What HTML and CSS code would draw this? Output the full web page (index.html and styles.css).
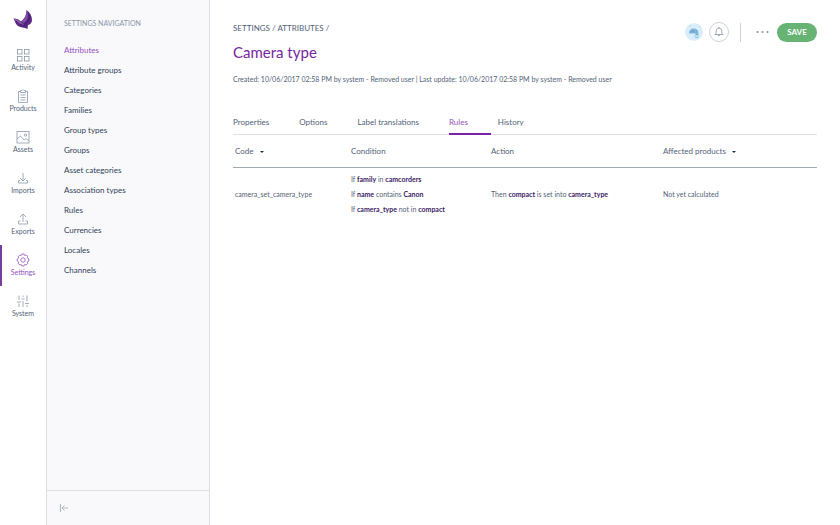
FILE: index.html
```html
<!DOCTYPE html>
<html lang="en">
<head>
<meta charset="utf-8">
<title>Camera type</title>
<link rel="stylesheet" href="styles.css">
</head>
<body>
<div class="app">
  <nav class="rail" aria-label="Main">
    <a class="logo" href="#" aria-label="Home">
      <svg width="20" height="21" viewBox="0 0 20 21">
        <path d="M0.500 9.500C4 9.500 6 10.500 8 12.500C11.500 10 13.500 6 13.500 1C17 3.500 19 7 19 11C19 14 17 15.500 15 16L14.500 20C11 18 8 19 5 17C2.500 15.500 2 12.500 .5 9.500Z" fill="#5b2a86"/>
        <path d="M1 9.800C4 10 6.500 11.500 8 13.500L12.500 16.500C7 16.500 3.500 14 1 9.800Z" fill="#8a5aad"/>
        <path d="M13.800 1.500C16 6 14.500 12 10.500 14L8.500 12.800C12 10 13.800 6 13.800 1.500Z" fill="#8652a9"/>
        <path d="M3 12C6 15.500 10 17 14 16M15.500 4C17.500 9 15.500 13 11.500 15" fill="none" stroke="#3d1562" stroke-width=".9"/>
      </svg>
    </a>
    <a class="rail-item" href="#">
      <svg class="icon" viewBox="0 0 14 14"><rect x="1.500" y="1.500" width="4.500" height="4.500"/><rect x="8.500" y="1.500" width="4.500" height="4.500"/><rect x="1.500" y="8.500" width="4.500" height="4.500"/><rect x="8.500" y="8.500" width="4.500" height="4.500"/></svg>
      <span>Activity</span>
    </a>
    <a class="rail-item" href="#">
      <svg class="icon" viewBox="0 0 14 14"><path d="M4.500 2.500H2.500V13.500H11.500V2.500H9.500M4.500 1.500H6L7 .5L8 1.500H9.500V3.500H4.500ZM4.500 6H9.500M4.500 8.500H9.500M4.500 11H9.500"/></svg>
      <span>Products</span>
    </a>
    <a class="rail-item" href="#">
      <svg class="icon" viewBox="0 0 14 14"><rect x="1" y="1.500" width="12" height="11.500"/><circle cx="9.500" cy="5" r="1.200"/><path d="M1 9L4.500 6L8 10L10 8.500L13 11"/></svg>
      <span>Assets</span>
    </a>
    <a class="rail-item" href="#">
      <svg class="icon" viewBox="0 0 14 14"><path d="M7 2V10M4 7L7 10L10 7M4 9.500H2.500V12H11.500V9.500H10"/></svg>
      <span>Imports</span>
    </a>
    <a class="rail-item" href="#">
      <svg class="icon" viewBox="0 0 14 14"><path d="M7 10V2M4 5L7 2L10 5M4.500 9H2.500V12H11.500V9H9.500"/></svg>
      <span>Exports</span>
    </a>
    <a class="rail-item active" href="#" aria-current="page">
      <svg class="icon" viewBox="0 0 14 14"><circle cx="7" cy="7" r="2.200"/><path d="M6 1H8L8.600 2.400L10.300 1.900L11.500 3.200L11.200 4.800L12.800 5.800V8L11.400 8.800L11.700 10.500L10.400 11.800L8.800 11.400L8 13H6L5.200 11.500L3.600 11.900L2.300 10.600L2.600 9L1.200 8V6L2.600 5.100L2.300 3.500L3.600 2.200L5.200 2.600Z"/></svg>
      <span>Settings</span>
    </a>
    <a class="rail-item" href="#">
      <svg class="icon" viewBox="0 0 14 14"><path d="M3 1.500V6M3 9.500V13M1 8H5M7 1.500V3M7 7V13M5.500 5H8.500M11 1.500V7.500M11 11V13M9 9.500H13"/></svg>
      <span>System</span>
    </a>
  </nav>

  <aside class="panel">
    <nav class="panel-nav" aria-labelledby="panel-title">
      <h2 id="panel-title">SETTINGS NAVIGATION</h2>
      <ul>
        <li><a class="current" href="#">Attributes</a></li>
        <li><a href="#">Attribute groups</a></li>
        <li><a href="#">Categories</a></li>
        <li><a href="#">Families</a></li>
        <li><a href="#">Group types</a></li>
        <li><a href="#">Groups</a></li>
        <li><a href="#">Asset categories</a></li>
        <li><a href="#">Association types</a></li>
        <li><a href="#">Rules</a></li>
        <li><a href="#">Currencies</a></li>
        <li><a href="#">Locales</a></li>
        <li><a href="#">Channels</a></li>
      </ul>
    </nav>
    <div class="panel-foot">
      <button class="plain" type="button" aria-label="Collapse navigation">
        <svg class="collapse" viewBox="0 0 10 10"><path d="M1.500 1V9M9 5H3M5.500 2.500L3 5L5.500 7.500"/></svg>
      </button>
    </div>
  </aside>

  <main>
    <header>
      <div class="top">
        <div class="crumbs"><a href="#">SETTINGS</a> / <a href="#">ATTRIBUTES</a> /</div>
        <h1>Camera type</h1>
      </div>
      <div class="actions">
        <button class="plain" type="button" aria-label="User">
          <svg class="avatar" viewBox="0 0 18 18"><circle cx="9" cy="9" r="9" fill="#d9edfb"/><path d="M4 10.500C4 7 6 5.500 8.800 5.500S13.500 7.500 13.500 10.500V12H10.500V10.500H4Z" fill="#7fb6dd"/><path d="M9.500 12H13.500V15H10Z" fill="#8fc4e8"/><path d="M6 9L8 7.500L9.500 9.500M11 7L12.500 8.500" fill="none" stroke="#4f93c4" stroke-width=".7"/><path d="M10 13.200H13" stroke="#f3faff" stroke-width=".9"/><circle cx="5" cy="3" r=".4" fill="#6cabd8"/><circle cx="14.500" cy="4" r=".4" fill="#6cabd8"/></svg>
        </button>
        <button class="bell" type="button" aria-label="Notifications">
          <svg viewBox="0 0 10 10"><path d="M1 7.500H9C7.800 6.500 7.800 5.500 7.800 4.200C7.800 2.500 6.800 1.200 5 1.200S2.200 2.500 2.200 4.200C2.200 5.500 2.200 6.500 1 7.500ZM4 7.700C4 9.200 6 9.200 6 7.700M5 .3V1.200"/></svg>
        </button>
        <span class="divider"></span>
        <button class="plain" type="button" aria-label="More actions">
          <svg class="dots" viewBox="0 0 13 4"><circle cx="1.500" cy="2" r="1"/><circle cx="6.500" cy="2" r="1"/><circle cx="11.500" cy="2" r="1"/></svg>
        </button>
        <button class="save" type="submit">SAVE</button>
      </div>
    </header>
    <p class="meta">Created: 10/06/2017 02:58 PM by system - Removed user | Last update: 10/06/2017 02:58 PM by system - Removed user</p>

    <nav class="tabs" aria-label="Attribute">
      <a href="#">Properties</a>
      <a href="#">Options</a>
      <a href="#">Label translations</a>
      <a class="selected" href="#">Rules</a>
      <a href="#">History</a>
    </nav>

    <table>
      <thead>
        <tr>
          <th scope="col">Code<span class="caret"></span></th>
          <th class="condition" scope="col">Condition</th>
          <th class="action" scope="col">Action</th>
          <th class="affected" scope="col">Affected products<span class="caret"></span></th>
        </tr>
      </thead>
      <tbody>
        <tr>
          <td>camera_set_camera_type</td>
          <td>
            <div>If <b>family</b> in <b>camcorders</b></div>
            <div>If <b>name</b> contains <b>Canon</b></div>
            <div>If <b>camera_type</b> not in <b>compact</b></div>
          </td>
          <td>Then <b>compact</b> is set into <b>camera_type</b></td>
          <td>Not yet calculated</td>
        </tr>
      </tbody>
    </table>
  </main>
</div>
</body>
</html>
```
FILE: styles.css
```css
* { box-sizing: border-box; }
body {
  margin: 0;
  font-family: Lato, sans-serif;
  font-size: 8px;
  color: #526278;
  background: #fff;
}
a { color: inherit; text-decoration: none; }
button { font: inherit; cursor: pointer; }
svg { display: block; }
.plain { padding: 0; border: 0; background: none; }

.app { display: flex; min-height: 100vh; }

.rail { flex: 0 0 46px; font-size: 7px; }
.logo { display: flex; justify-content: center; height: 40px; padding-top: 9px; }
.rail-item {
  display: flex;
  flex-direction: column;
  align-items: center;
  gap: 1px;
  height: 41px;
  padding-top: 8px;
  line-height: 9px;
  border-left: 2px solid transparent;
  border-right: 2px solid transparent;
}
.rail-item.active { color: #9452ba; border-left-color: #763e9e; }
.icon { width: 14px; height: 14px; fill: none; stroke: #8b98a9; stroke-width: .8; }
.active .icon { stroke: #9452ba; }

.panel {
  flex: 0 0 164px;
  display: flex;
  flex-direction: column;
  background: #f9f9fb;
  border: solid #dddfe6;
  border-width: 0 1px;
}
.panel-nav { flex: 1; padding: 17px 17px 0; }
.panel-nav h2 { margin: 0 0 11px; font-size: 7px; line-height: 12px; font-weight: 400; color: #8996a8; }
.panel-nav ul { margin: 0; padding: 0; list-style: none; }
.panel-nav li { line-height: 20px; color: #2f4259; }
.panel-nav .current { color: #9452ba; }
.panel-foot { display: flex; align-items: center; height: 35px; padding-left: 12px; border-top: 1px solid #dddfe6; }
.collapse { width: 10px; height: 10px; fill: none; stroke: #a1a9b7; stroke-width: .8; }

main { flex: 1; padding: 22px 23px; }
header { display: flex; justify-content: space-between; align-items: flex-start; }
.crumbs { line-height: 12px; }
h1 { margin: 7px 0 0; font-size: 15px; line-height: 22px; font-weight: 400; color: #7625a3; }
.actions { display: flex; align-items: center; }
.avatar { width: 18px; height: 18px; }
.bell {
  display: flex;
  align-items: center;
  justify-content: center;
  width: 20px;
  height: 20px;
  margin-left: 6px;
  padding: 0;
  border: 1px solid #ccd1da;
  border-radius: 50%;
  background: #fff;
}
.bell svg { width: 10px; height: 10px; fill: none; stroke: #8390a3; stroke-width: .8; }
.divider { width: 1px; height: 19px; margin: 0 15px 0 11px; background: #ccd1da; }
.dots { width: 13px; height: 4px; fill: #8390a3; }
.save {
  width: 40px;
  height: 19px;
  margin-left: 8px;
  padding: 0;
  border: 0;
  border-radius: 10px;
  background: #67b373;
  color: #fff;
  font-weight: 700;
}
.meta { margin: 10px 0 0; font-size: 7px; line-height: 12px; }

.tabs { display: flex; gap: 7px; margin-top: 27px; border-bottom: 1px solid #dfe1e8; }
.tabs a { height: 23px; padding-right: 23px; line-height: 20px; border-bottom: 2px solid transparent; margin-bottom: -1px; }
.tabs .selected { color: #9452ba; border-bottom-color: #7a1fae; }

table { width: 100%; border-collapse: collapse; table-layout: fixed; }
th { height: 32px; padding: 0 2px; font-weight: 400; text-align: left; border-bottom: 1px solid #a1a9b7; }
td { padding: 4px 2px; font-size: 7px; line-height: 15px; }
.condition { width: 140px; }
.action { width: 172px; }
.affected { width: 156px; }
b { font-weight: 700; color: #3c1c64; }
.caret {
  display: inline-block;
  margin-left: 6px;
  border: 2px solid transparent;
  border-top-color: #11324d;
  border-bottom-width: 0;
  vertical-align: middle;
}
```
